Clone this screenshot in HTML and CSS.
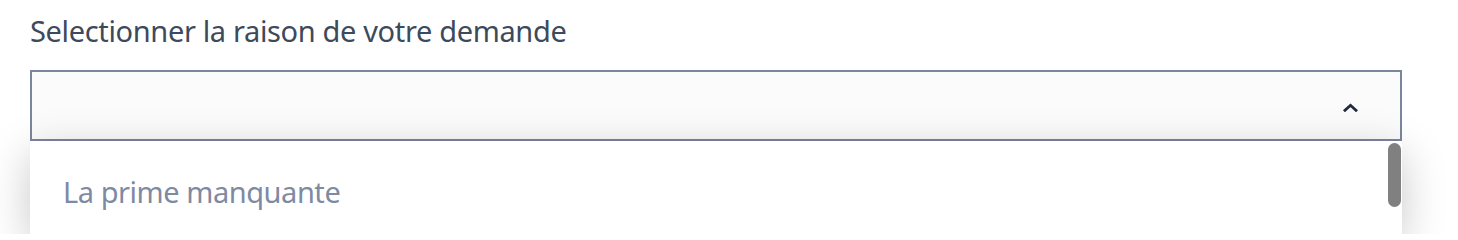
FILE: index.html
```html
<!DOCTYPE html>
<html lang="fr">
<head>
<meta charset="utf-8">
<link rel="stylesheet" href="styles.css">
</head>
<body>
<div class="field">
  <label class="label">Selectionner la raison de votre demande</label>
  <div class="select-wrap">
    <div class="select">
      <svg class="chevron" width="15" height="9" viewBox="0 0 15 9"><path d="M2 7.3 L7.5 2.3 L13 7.3" fill="none" stroke="#1f2a3c" stroke-width="2.8" stroke-linecap="square"/></svg>
    </div>
    <div class="panel">
      <div class="option">La prime manquante</div>
      <div class="thumb"></div>
    </div>
  </div>
</div>
</body>
</html>
```

FILE: styles.css
```css
html, body {
  margin: 0;
  padding: 0;
  background: #ffffff;
  overflow: hidden;
  height: 234px;
}
.field {
  padding: 12px 0 0 30px;
  width: 1372px;
  font-family: "Noto Sans", "Open Sans", sans-serif;
}
.label {
  display: block;
  font-size: 29px;
  line-height: 38px;
  color: #3d4a5c;
  letter-spacing: -0.35px;
  margin-bottom: 20px;
}
.select-wrap {
  position: relative;
}
.select {
  box-sizing: border-box;
  height: 71px;
  border: 2px solid #7a859e;
  background: #fbfbfb;
  display: flex;
  align-items: center;
  justify-content: flex-end;
  padding-right: 42px;
}
.chevron {
  display: block;
  margin-top: 4px;
}
.panel {
  position: absolute;
  left: 0;
  right: 0;
  top: 71px;
  height: 93px;
  background: #ffffff;
  box-shadow: 0 12px 44px rgba(0, 0, 0, 0.22);
  z-index: 2;
}
.option {
  padding: 32px 33px;
  font-size: 29px;
  line-height: 38px;
  color: #7e8aa3;
  letter-spacing: -0.45px;
}
.thumb {
  position: absolute;
  right: 1px;
  top: 2px;
  width: 13px;
  height: 64px;
  border-radius: 7px;
  background: #808080;
}
```
